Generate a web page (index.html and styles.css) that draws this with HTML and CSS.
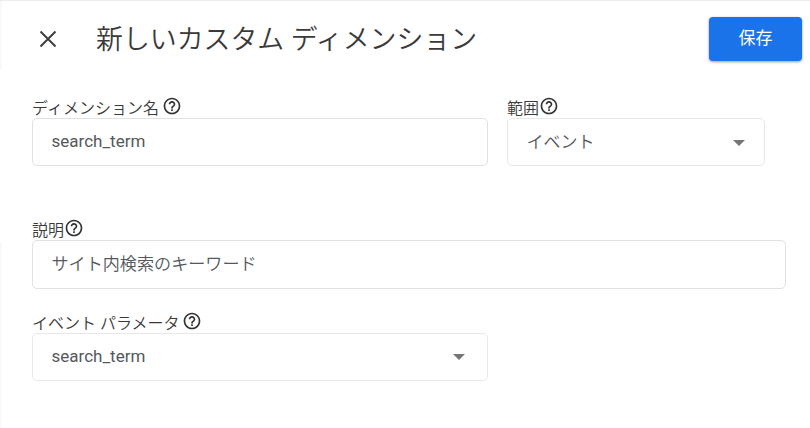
FILE: index.html
```html
<!DOCTYPE html>
<html lang="ja">
<head>
    <meta charset="UTF-8">
    <meta name="viewport" content="width=device-width, initial-scale=1.0">
    <title>新しいカスタム ディメンション</title>
    <link rel="stylesheet" href="styles.css">
</head>
<body>
    <svg width="0" height="0" class="sprite">
        <symbol id="help" viewBox="0 0 24 24">
            <path d="M11 18h2v-2h-2v2zm1-16C6.480 2 2 6.480 2 12s4.480 10 10 10 10-4.480 10-10S17.520 2 12 2zm0 18c-4.410 0-8-3.590-8-8s3.590-8 8-8 8 3.590 8 8-3.590 8-8 8zm0-14c-2.210 0-4 1.790-4 4h2c0-1.100.9-2 2-2s2 .9 2 2c0 2-3 1.750-3 5h2c0-2.250 3-2.500 3-5 0-2.210-1.790-4-4-4z"/>
        </symbol>
    </svg>

    <div class="header">
        <button class="close-btn" aria-label="閉じる">
            <svg viewBox="0 0 18 18"><path d="M1.500 1.500l15 15M16.500 1.500l-15 15"/></svg>
        </button>
        <h1>新しいカスタム ディメンション</h1>
        <button class="save-btn">保存</button>
    </div>

    <div class="form">
        <div class="form-row">
            <div class="form-group name-group">
                <div class="label"><span>ディメンション名</span><svg class="help spaced"><use href="#help"/></svg></div>
                <div class="field">search_term</div>
            </div>
            <div class="form-group scope-group">
                <div class="label"><span>範囲</span><svg class="help"><use href="#help"/></svg></div>
                <div class="field select light"><span>イベント</span><i class="arrow"></i></div>
            </div>
        </div>
        <div class="form-group description-group">
            <div class="label"><span>説明</span><svg class="help"><use href="#help"/></svg></div>
            <div class="field light">サイト内検索のキーワード</div>
        </div>
        <div class="form-group param-group">
            <div class="label"><span>イベント パラメータ</span><svg class="help spaced"><use href="#help"/></svg></div>
            <div class="field select wide"><span>search_term</span><i class="arrow"></i></div>
        </div>
    </div>
</body>
</html>
```
FILE: styles.css
```css
* {
    box-sizing: border-box;
}

body {
    margin: 0;
    height: 428px;
    overflow: hidden;
    border-top: 1px solid #ebebeb;
    background: linear-gradient(#f8f9fa, #f8f9fa) 0 0 / 2px 70px no-repeat,
                linear-gradient(#f8f9fa, #f8f9fa) 0 242px / 2px 186px no-repeat,
                #fff;
    font-family: Roboto, "Noto Sans CJK JP", sans-serif;
    color: #3a3a3a;
}

.sprite {
    display: block;
}

.header {
    display: flex;
    align-items: center;
    height: 76px;
    padding: 0 8px 0 39px;
}

h1 {
    flex: 1;
    margin: 0 0 0 39px;
    padding-top: 2px;
    font-size: 26.9px;
    font-weight: 350;
    line-height: 40px;
    white-space: nowrap;
}

button {
    padding: 0;
    border: none;
    font-family: inherit;
    cursor: pointer;
}

.close-btn {
    width: 18px;
    height: 18px;
    background: none;
}

.close-btn svg {
    display: block;
    width: 18px;
    height: 18px;
    fill: none;
    stroke: #3c4043;
    stroke-width: 2;
}

.save-btn {
    width: 93px;
    height: 44px;
    padding-bottom: 5px;
    border-radius: 4px;
    background-color: #1a73e8;
    box-shadow: 0 1px 3px rgba(0, 0, 0, 0.4);
    color: #fff;
    font-size: 17px;
    font-weight: 400;
}

.form {
    padding: 19px 24px 0 32px;
}

.form-row {
    display: flex;
    gap: 19px;
}

.name-group {
    width: 456px;
}

.scope-group {
    width: 258px;
}

.description-group {
    margin-top: 52px;
}

.param-group {
    width: 456px;
    margin-top: 22px;
}

.label {
    display: flex;
    align-items: center;
    height: 22px;
    padding-top: 4px;
    font-size: 16px;
    font-weight: 350;
    line-height: 18px;
    white-space: nowrap;
}

.help {
    width: 20px;
    height: 20px;
    margin: -6px 0 0 0;
    fill: #333;
}

.help.spaced {
    margin-left: 3px;
}

.field {
    display: flex;
    align-items: center;
    height: 48px;
    padding: 0 19px 2px 18.5px;
    border: 1px solid #dfe1e5;
    border-radius: 5px;
    color: #54585c;
    font-size: 17px;
}

.description-group .field {
    height: 49px;
    padding-bottom: 4px;
    font-size: 17.1px;
}

.light {
    font-weight: 350;
}

.select {
    justify-content: space-between;
    border-color: #e8e8ea;
}

.select.light {
    padding-bottom: 3px;
}

.select.wide {
    padding-right: 22px;
}

.arrow {
    margin-top: 1px;
    border: 6px solid transparent;
    border-top-color: #757575;
    border-bottom: none;
}

.light .arrow {
    margin-top: 4px;
}
```
